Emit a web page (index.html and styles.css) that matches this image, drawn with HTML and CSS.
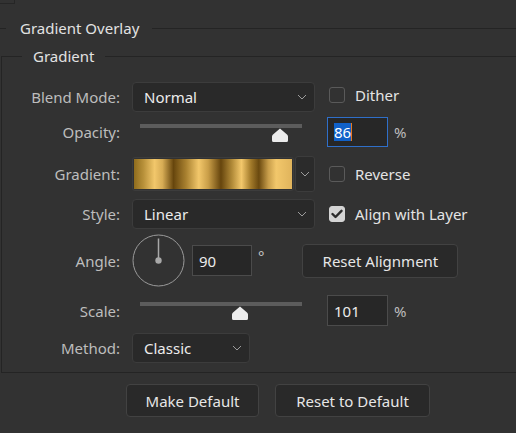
FILE: index.html
```html
<!DOCTYPE html>
<html>
<head>
<meta charset="utf-8">
<link rel="stylesheet" href="styles.css">
</head>
<body>
<div class="corner"></div>
<div class="section-head">
  <span class="rule rule-short"></span>
  <span class="section-title">Gradient Overlay</span>
  <span class="rule"></span>
</div>
<fieldset class="group">
  <legend class="group-title">Gradient</legend>

  <div class="row row-blend">
    <span class="lbl">Blend Mode:</span>
    <div class="select select-wide"><span class="select-value">Normal</span><svg class="chev" width="10" height="6" viewBox="0 0 10 6"><path d="M1 1 L5 5 L9 1" fill="none" stroke="#9c9c9c" stroke-width="1"/></svg></div>
    <label class="check check-raised"><span class="box"></span><span class="check-text">Dither</span></label>
  </div>

  <div class="row row-opacity">
    <span class="lbl">Opacity:</span>
    <div class="slider"><div class="track"></div><svg class="thumb" style="left:140px" width="16" height="14" viewBox="0 0 16 14"><path d="M8 0.5 L15 6.5 Q16 7.3 16 8.5 V12.5 Q16 14 14.5 14 H1.5 Q0 14 0 12.5 V8.5 Q0 7.3 1 6.5 Z" fill="#ececec"/></svg></div>
    <div class="num num-focus"><span class="sel">86</span><span class="caret"></span></div>
    <span class="unit">%</span>
  </div>

  <div class="row row-gradient">
    <span class="lbl">Gradient:</span>
    <div class="grad-field">
      <div class="grad-preview"><div class="grad-fill"></div></div>
      <div class="grad-btn"><svg class="chev" width="10" height="6" viewBox="0 0 10 6"><path d="M1 1 L5 5 L9 1" fill="none" stroke="#9c9c9c" stroke-width="1"/></svg></div>
    </div>
    <label class="check"><span class="box"></span><span class="check-text">Reverse</span></label>
  </div>

  <div class="row row-style">
    <span class="lbl">Style:</span>
    <div class="select select-wide"><span class="select-value">Linear</span><svg class="chev" width="10" height="6" viewBox="0 0 10 6"><path d="M1 1 L5 5 L9 1" fill="none" stroke="#9c9c9c" stroke-width="1"/></svg></div>
    <label class="check"><span class="box box-on"><svg width="12" height="10" viewBox="0 0 12 10"><path d="M1.5 5 L4.5 8 L10.5 1.8" fill="none" stroke="#2b2b2b" stroke-width="2.4" stroke-linecap="round" stroke-linejoin="round"/></svg></span><span class="check-text">Align with Layer</span></label>
  </div>

  <div class="row row-angle">
    <span class="lbl">Angle:</span>
    <svg class="dial" width="53" height="53" viewBox="0 0 53 53">
      <circle cx="26.5" cy="26.5" r="25.5" fill="none" stroke="#9a9a9a" stroke-width="1"/>
      <line x1="26.5" y1="4.5" x2="26.5" y2="26.5" stroke="#a8a8a8" stroke-width="1.5"/>
      <circle cx="26.5" cy="26.5" r="3.2" fill="#a8a8a8"/>
    </svg>
    <div class="num num-angle"><span class="num-text">90</span></div>
    <span class="deg">°</span>
    <button class="btn btn-align">Reset Alignment</button>
  </div>

  <div class="row row-scale">
    <span class="lbl">Scale:</span>
    <div class="slider"><div class="track"></div><svg class="thumb" style="left:100px" width="16" height="14" viewBox="0 0 16 14"><path d="M8 0.5 L15 6.5 Q16 7.3 16 8.5 V12.5 Q16 14 14.5 14 H1.5 Q0 14 0 12.5 V8.5 Q0 7.3 1 6.5 Z" fill="#ececec"/></svg></div>
    <div class="num"><span class="num-text">101</span></div>
    <span class="unit">%</span>
  </div>

  <div class="row row-method">
    <span class="lbl">Method:</span>
    <div class="select select-short"><span class="select-value">Classic</span><svg class="chev" width="10" height="6" viewBox="0 0 10 6"><path d="M1 1 L5 5 L9 1" fill="none" stroke="#9c9c9c" stroke-width="1"/></svg></div>
  </div>
</fieldset>

<div class="actions">
  <button class="btn btn-make">Make Default</button>
  <button class="btn btn-reset">Reset to Default</button>
</div>
</body>
</html>
```

FILE: styles.css
```css
html, body {
  margin: 0;
  padding: 0;
}
body {
  width: 516px;
  height: 433px;
  overflow: hidden;
  background: #323232;
  font-family: "Noto Sans", "Open Sans", sans-serif;
  font-size: 15px;
  line-height: 20px;
  color: #c2c2c2;
}

.corner {
  width: 14px;
  height: 3px;
  border-right: 1px solid #262626;
  border-bottom: 1px solid #262626;
}

.section-head {
  display: flex;
  align-items: center;
  height: 20px;
  margin-top: 14px;
}
.rule {
  flex: 1;
  height: 1px;
  background: #242424;
}
.rule-short {
  flex: none;
  width: 6px;
}
.section-title {
  color: #e2e2e2;
  padding: 0 13px 0 14px;
}

.group {
  margin: 8px 0 0 1px;
  padding: 0 0 9px 0;
  border: 1px solid #242424;
  border-right: none;
  width: 515px;
  min-width: 0;
  box-sizing: border-box;
}
.group-title {
  margin-left: 20px;
  padding: 0 11px;
  color: #e2e2e2;
  line-height: 20px;
}

.row {
  display: flex;
  align-items: center;
}
.row-blend { height: 30px; margin-top: 16px; }
.row-opacity { height: 30px; margin-top: 5px; }
.row-gradient { height: 36px; margin-top: 9px; }
.row-style { height: 30px; margin-top: 7px; }
.row-angle { height: 53px; margin-top: 5px; }
.row-scale { height: 31px; margin-top: 8px; }
.row-method { height: 30px; margin-top: 7px; }

.lbl {
  flex: none;
  width: 118px;
  margin-right: 12px;
  text-align: right;
  color: #bdbdbd;
}

.select {
  flex: none;
  box-sizing: border-box;
  height: 30px;
  display: flex;
  align-items: center;
  justify-content: space-between;
  padding: 0 7px 0 11px;
  background: #292929;
  border: 1px solid #3c3c3c;
  border-radius: 4px;
  color: #ececec;
}
.select-wide { width: 183px; }
.select-short { width: 118px; }
.chev { display: block; }

.check {
  display: flex;
  align-items: center;
  margin-left: 14px;
  color: #e4e4e4;
}
.check-raised {
  margin-bottom: 4px;
}
.box {
  box-sizing: border-box;
  width: 16px;
  height: 16px;
  border: 1px solid #5a5a5a;
  border-radius: 3px;
  margin-right: 10px;
  display: flex;
  align-items: center;
  justify-content: center;
}
.box-on {
  background: #d4d4d4;
  border-color: #d4d4d4;
}

.slider {
  flex: none;
  position: relative;
  width: 183px;
  height: 30px;
}
.track {
  margin: 7px 13px 0 8px;
  height: 4px;
  background: #5c5c5c;
}
.thumb {
  position: absolute;
  top: 11px;
}
.row-scale .slider { height: 31px; }

.num {
  flex: none;
  box-sizing: border-box;
  width: 61px;
  height: 30px;
  margin-left: 12px;
  padding-left: 6px;
  display: flex;
  align-items: center;
  background: #272727;
  border: 1px solid #4b4b4b;
  color: #ececec;
}
.row-scale .num { height: 31px; }
.num-focus {
  border-color: #2f6fc9;
}
.sel {
  background: #1161c8;
  color: #ffffff;
  line-height: 18px;
}
.caret {
  width: 1px;
  height: 18px;
  background: #e7781f;
}
.unit {
  margin-left: 6px;
  color: #bdbdbd;
}

.grad-field {
  flex: none;
  width: 183px;
  height: 36px;
  display: flex;
  align-items: center;
}
.grad-preview {
  box-sizing: border-box;
  width: 162px;
  height: 34px;
  padding: 1px;
  border: 1px solid #3c3c3c;
  border-radius: 3px;
}
.grad-fill {
  height: 100%;
  background: linear-gradient(to right,
    #8f6c1d 0%, #b8913a 6%, #f2c76b 13%, #d7ac55 18%, #67460d 25%,
    #a98130 33%, #f2c76b 41%, #c99e48 47%, #66450d 55%,
    #b18a38 62%, #f3c86c 68%, #a27a2a 74%, #6a490f 79%,
    #c79d4a 85%, #f2c76b 90%, #e0b45c 100%);
}
.grad-btn {
  box-sizing: border-box;
  width: 20px;
  height: 36px;
  margin-left: 1px;
  border: 1px solid #3c3c3c;
  border-radius: 3px;
  background: #2b2b2b;
  display: flex;
  align-items: center;
  justify-content: center;
}

.dial {
  flex: none;
  display: block;
  margin-right: 7px;
}
.num-angle {
  width: 60px;
  height: 31px;
  margin-left: 0;
}
.deg {
  margin-left: 6px;
  margin-right: 38px;
  color: #c8c8c8;
  align-self: flex-start;
  margin-top: 12px;
}

.btn {
  box-sizing: border-box;
  height: 33px;
  padding: 0;
  background: #292929;
  border: 1px solid #424242;
  border-radius: 4px;
  color: #e6e6e6;
  font-family: inherit;
  font-size: 15px;
  line-height: 20px;
}
.btn-align { width: 156px; height: 34px; }
.btn-make { width: 133px; }
.btn-reset { width: 155px; }

.actions {
  display: flex;
  gap: 16px;
  padding-left: 126px;
  margin-top: 11px;
}
```
